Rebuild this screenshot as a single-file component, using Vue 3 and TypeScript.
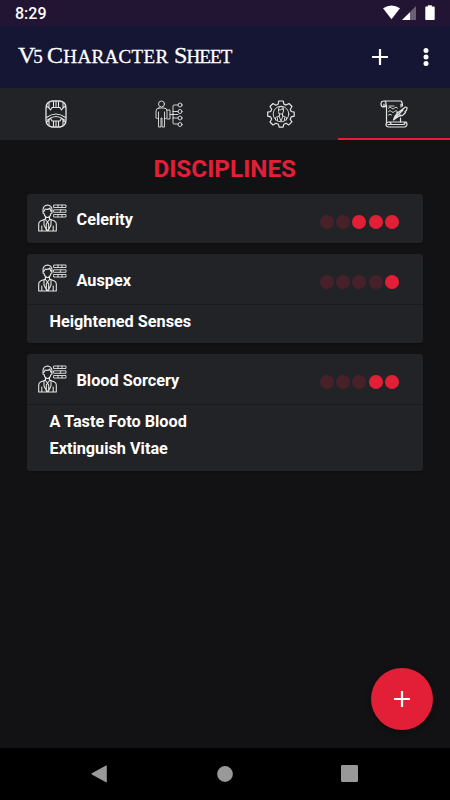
<script setup lang="ts">
interface Discipline {
  name: string
  level: number
  powers: string[]
}

const disciplines: Discipline[] = [
  { name: 'Celerity', level: 3, powers: [] },
  { name: 'Auspex', level: 1, powers: ['Heightened Senses'] },
  { name: 'Blood Sorcery', level: 2, powers: ['A Taste Foto Blood', 'Extinguish Vitae'] },
]
</script>

<template>
  <div class="screen">
    <div class="status">
      <span class="clock">8:29</span>
      <svg class="signals" width="54" height="16" viewBox="0 0 54 16">
        <path d="M1 3.3Q9.500-2.300 18 3.300L9.500 14.300Z" fill="#fff" />
        <path d="M34 1V15H20Z" fill="#696075" />
        <path d="M28 7.200V15H20Z" fill="#fff" />
        <path d="M43.800 1.500h2V.3h4v1.200h2.200q.7 0 .7.700v12.100q0 .7-.7.700h-8q-.7 0-.7-.7V2.200q0-.7.500-.7z" fill="#fff" />
      </svg>
    </div>

    <header class="appbar">
      <h1 class="title"><span class="word v5">V<small>5</small></span><span class="word character">C<small>haracter</small></span><span class="word sheet">S<small>heet</small></span></h1>
      <svg class="plus" width="16" height="16" viewBox="0 0 16 16"><path d="M8 0v16M0 8h16" /></svg>
      <svg class="more" width="6" height="20" viewBox="0 0 6 20">
        <circle cx="3" cy="3.500" r="2.500" /><circle cx="3" cy="10" r="2.500" /><circle cx="3" cy="16.500" r="2.500" />
      </svg>
    </header>

    <nav class="tabs">
      <div class="tab">
        <svg class="line" width="28" height="28" viewBox="0 0 28 28">
          <path stroke-width="1.300" d="M10 1h8q6 1 6 7v12q0 6-6 7h-8q-6-1-6-7V8q0-6 6-7z" />
          <path stroke-width="1.100" d="M7 3v5l1.500 2L10 7.500h8l1.500 2.500L21 8V3M11.500 1.500v5M14 1.500v5M16.500 1.500v5M4.500 6L7 8M23.500 6L21 8M4.500 17.500q9.500-7 19 0M5.500 20q8.500-7 17 0M7 25v-5l1.500-2 1.500 3h8l1.500-3 1.500 2v5M11.500 26.500V21M14 26.500V21M16.500 26.500V21M4.500 22L7 20.500M23.500 22L21 20.500" />
        </svg>
      </div>
      <div class="tab">
        <svg class="line" width="28" height="28" viewBox="0 0 28 28">
          <circle cx="6.500" cy="4" r="3" />
          <path d="M4 8h5q3 0 3 3v7q-1.500 1-2.500 0v9H7v-9H6v9H3.500v-9q-1 1-2.500 0v-7q0-3 3-3zM3.500 12v7M9.500 12v7" />
          <path d="M12 10h3v9h-3M15 14.500h8M18 14.500V6q0-1 1-1h4M18 14v9q0 1 1 1h4M18 11.500h5M18 18h5" />
          <circle cx="25" cy="5" r="2" /><circle cx="25" cy="11.500" r="2" /><circle cx="25" cy="18" r="2" /><circle cx="25" cy="24.500" r="2" />
        </svg>
      </div>
      <div class="tab">
        <svg class="line" width="28" height="28" viewBox="0 0 28 28">
          <path stroke-width="1.200" d="M11.800 1h4.400l.7 3.100 2.300 1L22 3.500 25 6.500l-1.700 2.700.9 2.300 3 .7v4l-3 .7-1 2.300 1.700 2.700-3.100 3-2.700-1.700-2.300 1-.7 3h-4l-.7-3-2.400-1L6 25l-3-3 1.700-2.800-1-2.300-3-.7v-4l3-.7 1-2.300L3 6.500 6 3.500l2.800 1.700 2.300-1z" />
          <circle cx="14" cy="14" r="7.800" />
          <path d="M11.500 11V9q0-2.500 2.500-2.500T16.500 9v2l-1 3h-3zM11.500 10q3 0 4-1.500 0 2 1 2M12.500 14v2l-4 1.500V20M15.500 14v2l4 1.500V20M12 16l2 5 2-5M10.500 18v2.500M17.500 18v2.500" />
        </svg>
      </div>
      <div class="tab active">
        <svg class="line" width="28" height="28" viewBox="0 0 28 28">
          <path stroke-width="1.200" d="M4 1h17q1.500 1 1.500 5M4 1Q1 1 1 4t3 3q2 0 2-3T4 1M4 4v3M6.500 5v17M20.500 18v4M21 4v3" />
          <path d="M8.500 8q1.500-2 3 0t3 0 3 0M8.500 11.500q1.500-2 3 0t3 0 3 0M8.500 15q1.500-2 3 0M9 6h5" />
          <path stroke-width="1.200" d="M13.500 20q1-4 4-7l8-6q2 0 1.500 1.500 0 2-2 3l.5 1-3 3-4 1-3 2zM15 18l8-8M18 15h3M17 12v3" />
          <path stroke-width="1.200" d="M9 22h17q1 1 1 2.500T25 27H9q-3 0-3-2.500T9 22q2 0 2 2.500H8M11 24.500h12q2 0 2-2" />
        </svg>
      </div>
    </nav>

    <main class="content">
      <h2 class="heading">DISCIPLINES</h2>
      <section v-for="d in disciplines" :key="d.name" class="card">
        <div class="row">
          <svg class="line person" width="29" height="28" viewBox="0 0 29 28">
            <path stroke-width="1.100" d="M5 9V6q0-4.500 4.500-5 4.500.5 4.500 5v3l-1 .5q-1 4-3.500 4T6 9.500zM5 8q2-1 2-3 3 1 5-1 0 3 2 4" />
            <path stroke-width="1.100" d="M7.500 13v2L2.500 17Q.7 18 .7 20v7h17.600v-7q0-2-1.800-3l-5-2v-2M7 15l2.500 3 2.500-3M6 16v5l2.500 5M13 16v5L10.500 26M9.500 18l-1.200 2v5l1.200 1.500 1.200-1.500v-5zM3.800 22v5M15.200 22v5" />
            <path d="M16 1h12v2.500H16zM16 10.500h12V13H16zM16 5.800h12v2.500H16zM20 1v2.500M24 1v2.500M23 5.800l-1 2.500M20 10.500V13M24 10.500V13" />
          </svg>
          <span class="name">{{ d.name }}</span>
          <span class="dots"><i v-for="n in 5" :key="n" :class="{ on: n > 5 - d.level }"></i></span>
        </div>
        <ul v-if="d.powers.length" class="powers">
          <li v-for="p in d.powers" :key="p">{{ p }}</li>
        </ul>
      </section>
    </main>

    <button class="fab" aria-label="Add">
      <svg class="plus" width="16" height="16" viewBox="0 0 16 16"><path d="M8 0v16M0 8h16" /></svg>
    </button>

    <footer class="navbar">
      <svg width="17" height="18" viewBox="0 0 17 18"><path d="M.8 8.300 15 .5q.8-.4.8.5v15.800q0 .9-.8.500L.8 9.500q-.8-.6 0-1.200z" /></svg>
      <svg width="16" height="16" viewBox="0 0 16 16"><circle cx="8" cy="8" r="7.900" /></svg>
      <svg width="17" height="17" viewBox="0 0 17 17"><rect width="17" height="17" rx="1.200" /></svg>
    </footer>
  </div>
</template>

<style>
body { margin: 0; background: #121214; }
</style>

<style scoped>
* { box-sizing: border-box; }
.screen { position: relative; width: 450px; height: 800px; display: flex; flex-direction: column; overflow: hidden; background: #121214; color: #fff; font-family: Roboto, "Liberation Sans", sans-serif; }
.status { height: 26px; flex: none; display: flex; justify-content: space-between; padding: 5px 14px 0 15px; background: #221533; }
.clock { font-size: 16px; line-height: 18px; font-weight: 500; }
.appbar { height: 61.5px; flex: none; display: flex; align-items: center; padding: 0 21px 0 18px; background: #151633; }
.title { flex: 1; display: flex; margin: 0; padding-bottom: 2px; font: 400 24px/30px "Liberation Serif", serif; -webkit-text-stroke: .3px #fff; white-space: nowrap; }
.title small { font-size: 19px; text-transform: uppercase; }
.v5 { width: 29px; letter-spacing: -2px; }
.character { width: 127px; letter-spacing: .35px; }
.sheet { letter-spacing: -.9px; }
.plus { fill: none; stroke: #fff; stroke-width: 2.2; }
.more { margin-left: 35px; fill: #fff; }
.tabs { height: 52.5px; flex: none; display: grid; grid-template-columns: repeat(4, 1fr); background: #222326; }
.tab { display: flex; align-items: center; justify-content: center; }
.tab.active { border-bottom: 2px solid #e31f37; padding-top: 2px; }
.line { fill: none; stroke: #e4e4e4; stroke-width: .9; stroke-linejoin: round; stroke-linecap: round; }
.content { flex: 1; display: flex; flex-direction: column; gap: 11px; padding: 13px 27.5px 0 27px; }
.heading { margin: 0 0 -1px; height: 31px; line-height: 31px; text-align: center; font-size: 24.3px; font-weight: 700; color: #e31f37; }
.card { border-radius: 3px; background: #222326; box-shadow: 0 1px 2px rgba(0, 0, 0, .25); }
.row { height: 49.3px; display: flex; align-items: center; padding: 0 23.5px 0 11px; }
.person { margin-top: -1px; }
.name { flex: 1; margin-left: 9.5px; padding-top: 2.4px; font-size: 16.25px; font-weight: 700; }
.dots { display: flex; gap: 2.3px; padding-top: 6px; }
.dots i { width: 14px; height: 14px; border-radius: 50%; background: #47212a; }
.dots i.on { background: #e31f37; }
.powers { margin: 0; padding: 3.5px 0 8px 22.5px; border-top: 1px solid #1a1b1e; list-style: none; font-size: 16.25px; font-weight: 700; }
.powers li { height: 27.3px; line-height: 27px; }
.fab { position: absolute; left: 371px; top: 668px; width: 62px; height: 62px; display: flex; align-items: center; justify-content: center; padding: 0; border: 0; border-radius: 50%; background: #e31f37; box-shadow: 0 3px 6px rgba(0, 0, 0, .3); }
.navbar { height: 52.5px; flex: none; display: flex; align-items: center; justify-content: space-between; padding: 0 92px 0 91px; background: #000; fill: #999; }
</style>
